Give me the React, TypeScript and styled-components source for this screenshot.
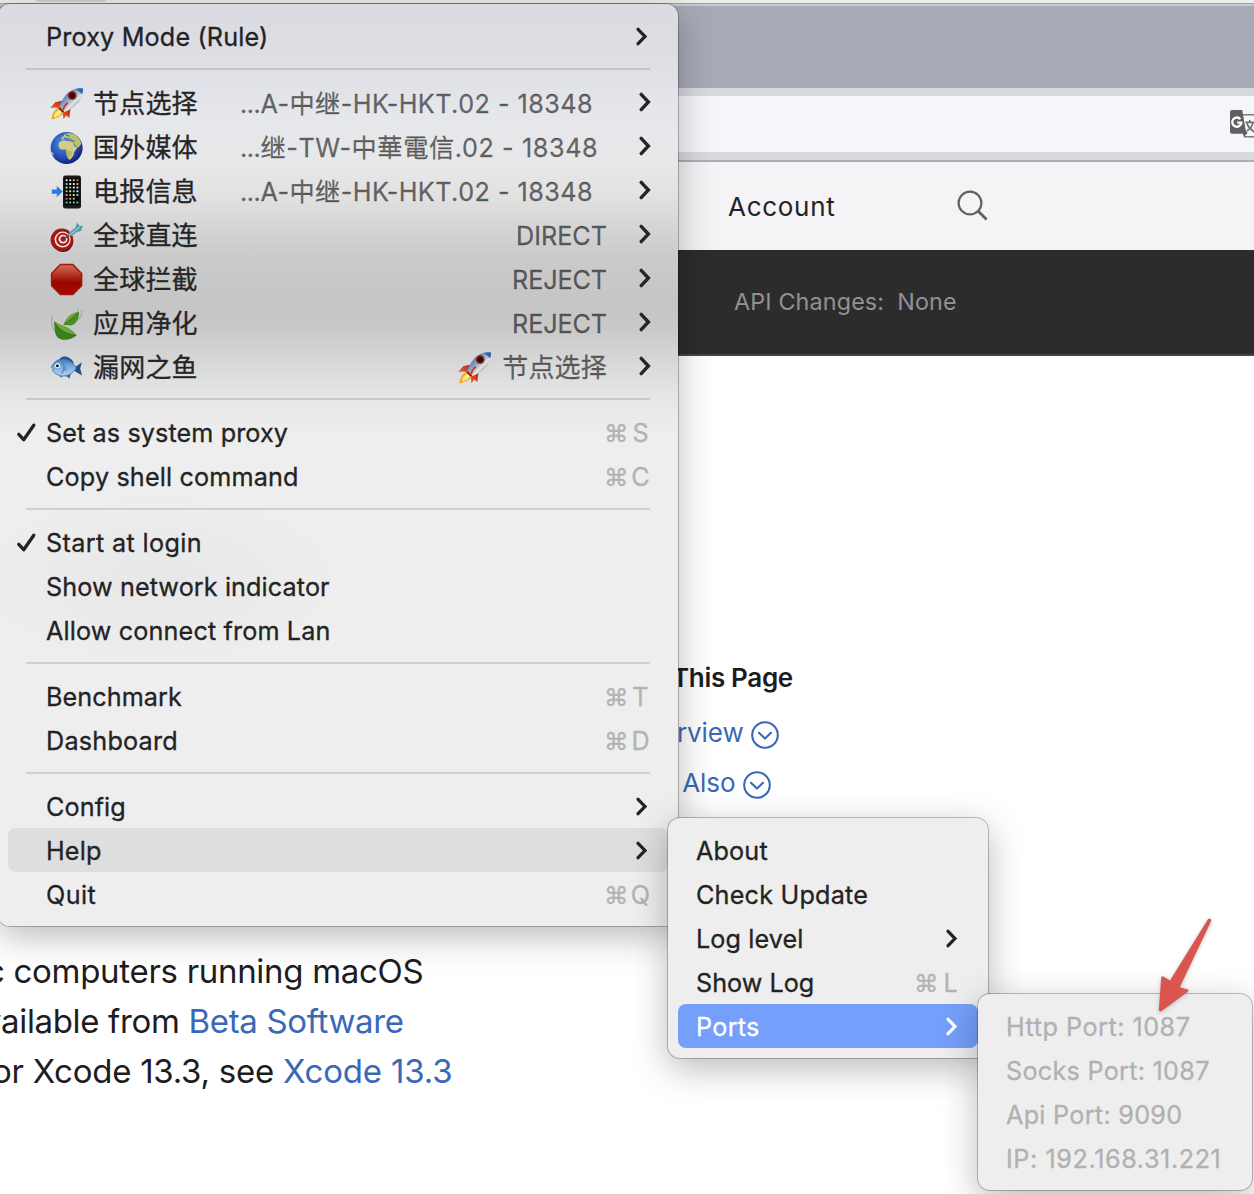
import React from "react";
import styled, { createGlobalStyle, css } from "styled-components";

const FONT = `Inter, "Noto Sans CJK SC", "Liberation Sans", sans-serif`;
const LINK = "#3a68b8";

const Global = createGlobalStyle`
  * { box-sizing: border-box; }
  body { margin: 0; background: #fff; font-family: ${FONT}; }
`;

const Screen = styled.div`
  position: relative;
  width: 1254px;
  height: 1194px;
  overflow: hidden;
  white-space: pre;
  background: #fff;
`;

/* ---------- browser window behind the menus ---------- */

const Page = styled.div`
  display: flex;
  flex-direction: column;
  height: 100%;
`;

const MenuBarEdge = styled.div`
  height: 3px;
  flex: none;
  padding-left: 36px;
  background: #edeee9;
`;

const MenuBarPill = styled.div`
  width: 70px;
  height: 2px;
  border-radius: 0 0 6px 6px;
  background: #d3d4d0;
`;

const TabStrip = styled.div`
  height: 85px;
  flex: none;
  background: #a7a9b5;
  border-top: 1px solid #a0a1a6;
  box-shadow: inset 0 2px 0 #c9cbd2;
`;

const AddressBar = styled.div`
  height: 74px;
  flex: none;
  display: flex;
  align-items: center;
  padding-left: 1230px;
  background: #f5f6f9;
  border-top: 8px solid #d8d8df;
  border-bottom: 2px solid #aeaeb3;
  box-shadow: inset 0 -8px 0 #d9dadd;
`;

const TranslateSvg = styled.svg`
  flex: none;
  width: 32px;
  height: 28px;
  margin-bottom: 8px;
`;

const SiteNav = styled.div`
  height: 88px;
  flex: none;
  display: flex;
  align-items: center;
  padding-left: 728px;
  background: #f4f4f7;
`;

const NavLink = styled.span`
  width: 229px;
  font-size: 26px;
  letter-spacing: 0.72px;
  color: #232325;
`;

const SearchSvg = styled.svg`
  width: 31px;
  height: 31px;
  margin-bottom: 1px;
`;

const ApiBar = styled.div`
  height: 106px;
  flex: none;
  display: flex;
  align-items: center;
  gap: 13px;
  padding: 0 0 2px 734px;
  font-size: 23.3px;
  letter-spacing: 0.16px;
  color: #929294;
  background: #2c2c2c;
  border-bottom: 2px solid #454547;
`;

const Outline = styled.nav`
  flex: none;
  display: flex;
  flex-direction: column;
  padding: 307px 0 0 672px;
  height: 590px;
`;

const OutlineTitle = styled.h2`
  margin: 0 0 14px;
  font-size: 26px;
  line-height: 30px;
  font-weight: 600;
  letter-spacing: -0.33px;
  color: #1d1d1f;
`;

const OutlineLink = styled.a<{ $indent: number; $track: number; $gap: number }>`
  display: flex;
  align-items: center;
  gap: ${(p) => p.$gap}px;
  height: 50px;
  padding-left: ${(p) => p.$indent}px;
  font-size: 26px;
  letter-spacing: ${(p) => p.$track}px;
  color: ${LINK};
`;

const CircleSvg = styled.svg`
  width: 28px;
  height: 28px;
  margin-top: 6px;
`;

const Article = styled.article`
  font-size: 33px;
  line-height: 50px;
  color: #1d1d1f;
`;

const Line = styled.div<{ $shift: number; $track: number }>`
  height: 50px;
  margin-left: ${(p) => p.$shift}px;
  letter-spacing: ${(p) => p.$track}px;
`;

const Link = styled.a<{ $track: number }>`
  letter-spacing: ${(p) => p.$track}px;
  color: ${LINK};
`;

/* ---------- menus ---------- */

const Menu = styled.div<{ $x: number; $y: number; $w: number; $tinted?: boolean }>`
  position: absolute;
  left: ${(p) => p.$x}px;
  top: ${(p) => p.$y}px;
  width: ${(p) => p.$w}px;
  padding: 10px;
  border-radius: 12px;
  -webkit-text-stroke: 0.3px currentColor;
  background: #eeeeee;
  box-shadow: 0 0 0 1px rgba(0, 0, 0, 0.24), 0 10px 36px rgba(0, 0, 0, 0.28);
  ${(p) =>
    p.$tinted &&
    css`
      background:
        radial-gradient(ellipse 190px 90px at 160px 575px, rgba(0, 0, 0, 0.028), transparent),
        linear-gradient(
          180deg,
          #dadbe1 0,
          #dedfe5 60px,
          #e6e7eb 110px,
          #e8e8ea 155px,
          #e2e2e3 190px,
          #d8d8d8 215px,
          #cbcbcb 250px,
          #c5c5c5 300px,
          #c9c9c9 325px,
          #d6d6d6 355px,
          #e3e3e3 385px,
          #eaeaea 408px,
          #eeeeee 435px
        );
    `}
`;

const Row = styled.div<{ $pad: number; $state?: "open" | "active"; $off?: boolean }>`
  display: flex;
  align-items: center;
  height: 44px;
  padding-left: ${(p) => p.$pad}px;
  border-radius: 8px;
  font-size: 25.2px;
  line-height: 42px;
  color: ${(p) => (p.$state === "active" ? "#fff" : p.$off ? "#b1b1b1" : "#232324")};
  background: ${(p) =>
    p.$state === "active" ? "#749ffa" : p.$state === "open" ? "#dedede" : "transparent"};
`;

const Mark = styled.span`
  display: flex;
  width: 30px;
  padding-top: 2px;
`;

const Label = styled.span<{ $track: number }>`
  flex: 1;
  padding-top: 2px;
  letter-spacing: ${(p) => p.$track}px;
`;

const Keys = styled.span`
  display: grid;
  grid-template-columns: 24px 22px;
  padding: 2px 16.5px 0 0;
  justify-items: center;
  color: #b3b3b3;
`;

const Command = styled.span`
  justify-self: start;
  margin-left: -1.5px;
  font-size: 24.4px;
`;

const ChevronSvg = styled.svg<{ $edge: number; $size: number }>`
  flex: none;
  width: ${(p) => p.$size * 0.6}px;
  height: ${(p) => p.$size}px;
  margin-right: ${(p) => p.$edge}px;
`;

const Rule = styled.hr`
  height: 2px;
  margin: 10px 18px;
  border: 0;
  background: rgba(0, 0, 0, 0.125);
`;

const GroupRow = styled.div`
  display: grid;
  grid-template-columns: 43px 148px 366px 1fr;
  align-items: center;
  height: 44px;
  padding-left: 42px;
  font-size: 25.2px;
  line-height: 42px;
  color: #252526;
`;

const GroupName = styled.span`
  font-size: 26px;
  letter-spacing: 0.2px;
  padding-top: 3px;
`;

const GroupValue = styled.span<{ $track: number; $left?: boolean }>`
  display: flex;
  align-items: center;
  justify-content: ${(p) => (p.$left ? "flex-start" : "flex-end")};
  padding-top: 3px;
  letter-spacing: ${(p) => p.$track}px;
  color: rgba(0, 0, 0, 0.56);
`;

const Dots = styled.span`
  margin-left: -1px;
  letter-spacing: -0.45px;
`;

const Nested = styled.span`
  display: flex;
  gap: 10px;
  height: 44px;
  margin-top: -3px;
  align-items: center;
`;

const GroupChevron = styled.span`
  display: flex;
  padding: 0 0 1px 32px;
`;

const EmojiSvg = styled.svg`
  flex: none;
  width: 34px;
  height: 34px;
  margin-top: 3px;
`;

const ArrowSvg = styled.svg`
  position: absolute;
  left: 1150px;
  top: 910px;
  width: 70px;
  height: 110px;
  filter: drop-shadow(0 1px 2px rgba(0, 0, 0, 0.22));
`;

/* ---------- drawings ---------- */

const Chevron = ({ edge = 21, size = 19 }: { edge?: number; size?: number }) => (
  <ChevronSvg $edge={edge} $size={size} viewBox="0 0 12 20">
    <path d="M2.2 2.4 9.4 10l-7.2 7.6" fill="none" stroke="currentColor" strokeWidth="3.4" strokeLinecap="round" />
  </ChevronSvg>
);

const Check = () => (
  <svg width="22" height="22" viewBox="0 0 22 22">
    <path d="M2.8 12.3 7.7 17.7 17.8 3.2" fill="none" stroke="currentColor" strokeWidth="3.3" strokeLinecap="round" strokeLinejoin="round" />
  </svg>
);

const CircleDown = () => (
  <CircleSvg viewBox="0 0 28 28" fill="none" stroke={LINK} strokeWidth="2.1">
    <circle cx="14" cy="14" r="12.8" />
    <path d="M8 11.8 14 17.6l6-5.8" strokeLinecap="round" strokeLinejoin="round" />
  </CircleSvg>
);

const Search = () => (
  <SearchSvg viewBox="0 0 31 31" fill="none" stroke="#606063" strokeWidth="2.2">
    <circle cx="13" cy="13" r="11.4" />
    <path d="M21 21l8.6 8.6" strokeWidth="2.8" />
  </SearchSvg>
);

const Translate = () => (
  <TranslateSvg viewBox="0 0 32 28">
    <path d="M13 4.8h18v22H14.6l-.6-3" fill="#f5f6f9" stroke="#7b7b7d" strokeWidth="1.5" />
    <path d="M2 0h10.2l3.4 19.8 2 3.2-3.6 3.8-1-3H2a2 2 0 0 1-2-2V2a2 2 0 0 1 2-2z" fill="#606062" />
    <path d="M10.4 9.2A4.6 4.6 0 1 0 11.4 12.6H7.2" fill="none" stroke="#fff" strokeWidth="2.3" />
    <path d="M15.4 12.4h10M19.8 10v2.4M23 12.6c-.8 3.6-3.2 6.6-6 8.2M16.8 13.6c1.4 3.4 3.6 5.6 7.6 8.4" fill="none" stroke="#6c6c6e" strokeWidth="1.6" />
  </TranslateSvg>
);

const Rocket = () => (
  <EmojiSvg viewBox="0 0 34 34">
    <defs>
      <linearGradient id="rkBody" x1="0" y1="0" x2="1" y2="1">
        <stop offset=".2" stopColor="#3f6fb0" />
        <stop offset=".45" stopColor="#8fabc4" />
        <stop offset=".62" stopColor="#e3e6e2" />
        <stop offset=".8" stopColor="#5c6c7c" />
      </linearGradient>
      <linearGradient id="rkFin" x1="1" y1="0" x2="0" y2="1">
        <stop offset="0" stopColor="#b81c16" />
        <stop offset="1" stopColor="#f0622a" />
      </linearGradient>
    </defs>
    <path d="M.3 21 5.2 15.2 13 13.4 10 21.2 5 20.6z" fill="url(#rkFin)" />
    <path d="M12.6 24.4 20.6 20.4 19.4 31 16.2 28.6 13.4 32.2z" fill="url(#rkFin)" />
    <path d="M1.6 32.6C1.6 27 4.6 22 9.6 20.8L13.6 25C11.6 29.6 7 30.6 1.6 32.6z" fill="#f7a51f" />
    <path d="M4 30.4c0-3.6 2.6-6.8 5.4-7.4l2.2 2.4C10 28.4 7 29.4 4 30.4z" fill="#fdf07a" />
    <path d="M33 1.2C27 .6 20 3 15.4 8.6 12 13 10 17 9 20.8l4.6 4.4c4.8-1.2 9.4-4 13.4-8.4C31.4 12 33.6 7 33 1.2z" fill="url(#rkBody)" />
    <path d="M26 1.8C28.4 1.2 31 1 33 1.2c.2 2-.1 4-.8 6z" fill="#3566b2" />
    <circle cx="22.2" cy="8.6" r="4.5" fill="#b3201c" />
    <circle cx="22.2" cy="8.6" r="3" fill="#231416" />
    <path d="M9 20.8 13.6 25.2" stroke="#7b1513" strokeWidth="1.6" />
    <path d="M17.6 15.6c-2.6 2.6-4 5-4.6 7.4" stroke="#d6392a" strokeWidth="2" fill="none" />
  </EmojiSvg>
);

const Globe = () => (
  <EmojiSvg viewBox="0 0 34 34">
    <defs>
      <radialGradient id="sea" cx=".4" cy=".35" r=".65">
        <stop offset="0" stopColor="#4f8fe0" />
        <stop offset=".6" stopColor="#2a55c0" />
        <stop offset="1" stopColor="#14257c" />
      </radialGradient>
    </defs>
    <circle cx="16.6" cy="17" r="16" fill="url(#sea)" />
    <path d="M8.600 12.600c1-2.400 3.400-3.200 5.800-3 1.600.2 3 .8 4.600.6l3.400.4 2.200 4.600 2.800.8c-.6 2.400-2.600 3.600-3.400 5.400.2 2.400-1 3.600-2 4.800-.8 1.800-1.600 2.600-3 2.400-1.400-1.600-1.800-4-1.800-6 .2-2-1-3-1.400-4.400-2 .2-4.800.6-6.400-1-.8-1.400-1.200-3-.8-4.600z" fill="#d2cd84" />
    <path d="M11.400 8.400c-.6-1.800.4-2.800 2-3.200l1-2c2.600-1.600 7.600-1.400 10.800.6 3 2 5 5 6 8.600-.6 2-1.800 2.400-2.600 4-1.600.2-2.800-2-4.400-3.200l-2.600-3.400c-2 .2-3.200-.6-4.400-1.600-1.800 0-3.400.8-5.800.2z" fill="#b9c373" />
    <path d="M15.600 19.200c.6 2 .4 5.400 2.800 8.800 1.400-1 2-2 2.600-3.400 1-1 1.600-2.600 1.800-4z" fill="#b4bb60" />
    <path d="M1 20.400c1.600.4 3 2 2.600 4.200-1-1-2-2.400-2.600-4.200z" fill="#d9cc6c" />
    <path d="M16 3.200c1 1.600 2 1.800 3.400 1.600M14 7.400l5 .8 5.600 2.600" stroke="#3f6eb4" strokeWidth="1.2" fill="none" />
  </EmojiSvg>
);

const DOTS = ["#e8e4d8", "#7fd36a", "#f4b04e", "#7cc4f2", "#e98bb4", "#d9d9e6", "#f3e27a", "#d8644c"];

const Phone = () => (
  <EmojiSvg viewBox="0 0 34 34">
    <path d="M1.8 14.4h5V11l6 5.6-6 5.6v-3.4h-5z" fill="#2f78e6" />
    <rect x="13" y=".6" width="18" height="33" rx="2.4" fill="#19191b" />
    <rect x="14.6" y="3.4" width="14.8" height="26.8" fill="#050506" />
    {[0, 1, 2, 3, 4, 5, 6].map((r) =>
      [0, 1, 2, 3].map((c) =>
        r === 5 && c === 3 ? null : (
          <rect key={`${r}-${c}`} x={15.6 + c * 3.6} y={4.2 + r * 3.7} width="2" height="2" rx=".4" fill={r === 6 ? "#58d0b0" : DOTS[(r * 3 + c * 5) % 8]} />
        ),
      ),
    )}
  </EmojiSvg>
);

const Dart = () => (
  <EmojiSvg viewBox="0 0 34 34">
    <ellipse cx="13" cy="22" rx="10.4" ry="11" fill="#5a0b0b" />
    <circle cx="11.8" cy="20.8" r="11.2" fill="#a01617" />
    <circle cx="12.6" cy="20.6" r="8" fill="#efe6e3" />
    <circle cx="12.8" cy="20.4" r="6.6" fill="#a81b1c" />
    <circle cx="13" cy="20.2" r="4.4" fill="#efe6e3" />
    <circle cx="13.2" cy="20" r="2.7" fill="#a81b1c" />
    <path d="M13.2 20 22 14.6" stroke="#5d3b3b" strokeWidth="1.3" />
    <path d="M18.4 17.6 18.8 13.8 25.4 8.8 27 3.8 29.8 7 33 6.8 31 12 26.8 13 21.4 17z" fill="#4f9bac" />
    <path d="M20 15.8 30 7.8" stroke="#8fd0dc" strokeWidth="1.3" />
  </EmojiSvg>
);

const Stop = () => (
  <EmojiSvg viewBox="0 0 34 34">
    <defs>
      <linearGradient id="stop" x1="0" y1="0" x2="0" y2="1">
        <stop offset="0" stopColor="#cc7060" />
        <stop offset=".35" stopColor="#b23222" />
        <stop offset=".6" stopColor="#980400" />
        <stop offset="1" stopColor="#a60a02" />
      </linearGradient>
    </defs>
    <path d="M10.4 1.6h12.4l8.8 9v12l-8.8 9H10.4l-8.8-9V10.6z" fill="url(#stop)" stroke="#a81608" strokeWidth="1.5" />
  </EmojiSvg>
);

const Leaf = () => (
  <EmojiSvg viewBox="0 0 34 34">
    <path d="M3 8.6C.2 13.6 1.4 20 4.6 24M31.6 3.4c.6 4-1 7.4-4 9.6M28 1.4 27 4" stroke="#a9aaa8" strokeWidth="1.3" fill="none" />
    <path d="M13.4 18C16 11 20 7 29 4.6 29.4 11.6 26.4 18 20.4 18.4 17.4 18.6 15.6 18 13.4 18z" fill="#4a8c25" />
    <path d="M13.4 18C16 11 20 7 29 4.6 25 9 20 14 13.4 18z" fill="#6fa63f" />
    <path d="M3.8 14C8 18.4 20 19 26.6 28.4 20.6 33.4 10.6 34.6 6.8 29.4 4 25 5 19.400 3.8 14z" fill="#3c7d1e" />
    <path d="M3.8 14C8 18.4 20 19 26.6 28.4 19 27.6 9 24 3.8 14z" fill="#6fa63f" />
    <path d="M4.6 15.6C9 23.6 17 27 26 28.4M14 17.6 28 6.2" stroke="#2c6414" strokeWidth=".8" fill="none" />
  </EmojiSvg>
);

const Fish = () => (
  <EmojiSvg viewBox="0 0 34 34">
    <defs>
      <linearGradient id="fish" x1="0" y1="0" x2="0" y2="1">
        <stop offset="0" stopColor="#3f78b8" />
        <stop offset=".5" stopColor="#7fb2e2" />
        <stop offset="1" stopColor="#b7d0e6" />
      </linearGradient>
    </defs>
    <path d="M9 10C10 4.4 18 3.6 23.6 11l-1 3z" fill="#24508c" />
    <path d="M24.6 16.4 31.8 11.2 30.2 17.6 32 24.6 25 20.2z" fill="#244f8a" />
    <path d="M13.6 24 20.6 23 19.6 27.6 17.2 25.8zM9 23.6l4.6 1-3 1.8z" fill="#2f5f9c" />
    <path d="M1.2 16.4C4 10 9 7.6 14.6 8c5 .4 8.8 4 11.8 9-3.4 5-7.8 8.2-13.4 8-5.2-.2-9-3-10.8-5.6l1.6-1.4z" fill="url(#fish)" stroke="#33659f" strokeWidth=".7" />
    <path d="M12.4 11.4c1.8 3.2 1.6 8-.6 11.4" stroke="#4a7fb8" strokeWidth="1.1" fill="none" />
    <path d="M13.4 13.4c3 1 4 4 2.4 7.4-2-1.4-2.8-4.4-2.4-7.4z" fill="#5b93cf" />
    <circle cx="7.6" cy="14.6" r="2.5" fill="#fff" />
    <circle cx="7.4" cy="14.8" r="1.5" fill="#15171c" />
  </EmojiSvg>
);

/* ---------- menu content ---------- */

type Item = { text: string; track: number; sub?: boolean; keys?: string; checked?: boolean; state?: "open" | "active"; off?: boolean };

const MenuRow = ({ item, marks }: { item: Item; marks?: boolean }) => (
  <Row $pad={marks ? 8 : 18} $state={item.state} $off={item.off}>
    {marks && <Mark>{item.checked && <Check />}</Mark>}
    <Label $track={item.track}>{item.text}</Label>
    {item.keys && (
      <Keys>
        <Command>⌘</Command>
        <span>{item.keys}</span>
      </Keys>
    )}
    {item.sub && <Chevron />}
  </Row>
);

const GROUPS = [
  { icon: <Rocket />, name: "节点选择", value: "A-中继-HK-HKT.02 - 18348", track: 0.46, left: true },
  { icon: <Globe />, name: "国外媒体", value: "继-TW-中華電信.02 - 18348", track: 0.6, left: true },
  { icon: <Phone />, name: "电报信息", value: "A-中继-HK-HKT.02 - 18348", track: 0.46, left: true },
  { icon: <Dart />, name: "全球直连", value: "DIRECT", track: 0 },
  { icon: <Stop />, name: "全球拦截", value: "REJECT", track: -0.1 },
  { icon: <Leaf />, name: "应用净化", value: "REJECT", track: -0.1 },
];

const SECTIONS: Item[][] = [
  [
    { text: "Set as system proxy", track: 0.1, checked: true, keys: "S" },
    { text: "Copy shell command", track: 0.15, keys: "C" },
  ],
  [
    { text: "Start at login", track: 0.36, checked: true },
    { text: "Show network indicator", track: 0.1 },
    { text: "Allow connect from Lan", track: 0.14 },
  ],
  [
    { text: "Benchmark", track: 0.08, keys: "T" },
    { text: "Dashboard", track: 0.22, keys: "D" },
  ],
  [
    { text: "Config", track: 0.1, sub: true },
    { text: "Help", track: 0.15, sub: true, state: "open" },
    { text: "Quit", track: 0.45, keys: "Q" },
  ],
];

const HELP: Item[] = [
  { text: "About", track: 0.15 },
  { text: "Check Update", track: 0.2 },
  { text: "Log level", track: 0.08, sub: true },
  { text: "Show Log", track: 0, keys: "L" },
  { text: "Ports", track: 0.3, sub: true, state: "active" },
];

const PORTS: Item[] = [
  { text: "Http Port: 1087", track: 0.5, off: true },
  { text: "Socks Port: 1087", track: 0.27, off: true },
  { text: "Api Port: 9090", track: 0.28, off: true },
  { text: "IP: 192.168.31.221", track: 0.58, off: true },
];

export default function App() {
  return (
    <Screen>
      <Global />
      <Page>
        <MenuBarEdge>
          <MenuBarPill />
        </MenuBarEdge>
        <TabStrip />
        <AddressBar>
          <Translate />
        </AddressBar>
        <SiteNav>
          <NavLink>Account</NavLink>
          <Search />
        </SiteNav>
        <ApiBar>
          <span>API Changes:</span>
          <span>None</span>
        </ApiBar>
        <Outline>
          <OutlineTitle>This Page</OutlineTitle>
          <OutlineLink $indent={5} $track={-0.1} $gap={7.8}>
            rview
            <CircleDown />
          </OutlineLink>
          <OutlineLink $indent={10.2} $track={-0.06} $gap={7.1}>
            Also
            <CircleDown />
          </OutlineLink>
        </Outline>
        <Article>
          <Line $shift={-14} $track={-0.3}>c computers running macOS</Line>
          <Line $shift={-17} $track={-0.34}>
            vailable from <Link $track={-0.33}>Beta Software</Link>
          </Line>
          <Line $shift={-8} $track={-0.25}>
            or Xcode 13.3, see <Link $track={-0.14}>Xcode 13.3</Link>
          </Line>
        </Article>
      </Page>

      <Menu $x={-2} $y={4} $w={680} $tinted>
        <MenuRow marks item={{ text: "Proxy Mode (Rule)", track: 0.16, sub: true }} />
        <Rule />
        {GROUPS.map((g) => (
          <GroupRow key={g.name}>
            {g.icon}
            <GroupName>{g.name}</GroupName>
            <GroupValue $track={g.track} $left={g.left}>
              {g.left && <Dots>...</Dots>}
              {g.value}
            </GroupValue>
            <GroupChevron>
              <Chevron edge={0} size={20} />
            </GroupChevron>
          </GroupRow>
        ))}
        <GroupRow>
          <Fish />
          <GroupName>漏网之鱼</GroupName>
          <GroupValue $track={0}>
            <Nested>
              <Rocket />
              <GroupName>节点选择</GroupName>
            </Nested>
          </GroupValue>
          <GroupChevron>
            <Chevron edge={0} size={20} />
          </GroupChevron>
        </GroupRow>
        {SECTIONS.map((section, i) => (
          <React.Fragment key={i}>
            <Rule />
            {section.map((item) => (
              <MenuRow key={item.text} marks item={item} />
            ))}
          </React.Fragment>
        ))}
      </Menu>

      <Menu $x={668} $y={818} $w={320}>
        {HELP.map((item) => (
          <MenuRow key={item.text} item={item} />
        ))}
      </Menu>

      <Menu $x={978} $y={994} $w={274}>
        {PORTS.map((item) => (
          <MenuRow key={item.text} item={item} />
        ))}
      </Menu>

      <ArrowSvg viewBox="0 0 70 110">
        <path d="M57.8 9.4Q59 7.8 61 9.2 61.4 10 61 11.6L29.8 77.2 38 79.6Q39 80.6 37.8 81.8L11 101.4Q9 101.8 8.8 100L11.2 67.4Q12 65.6 13.4 66.6L20 70.6z" fill="#d95650" />
      </ArrowSvg>
    </Screen>
  );
}
